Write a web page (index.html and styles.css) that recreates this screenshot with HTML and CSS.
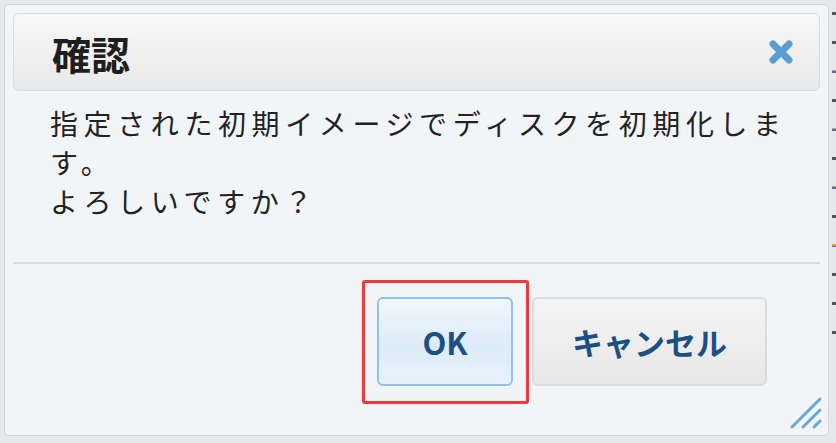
FILE: index.html
```html
<!DOCTYPE html>
<html lang="ja">
<head>
    <meta charset="UTF-8">
    <meta name="viewport" content="width=device-width, initial-scale=1.0">
    <title>確認</title>
    <link rel="stylesheet" href="styles.css">
</head>
<body>
    <div class="page">
        <div class="dialog">
            <div class="titlebar">
                <span class="title">確認</span>
                <button class="close" title="閉じる">
                    <svg width="28" height="28" viewBox="0 0 28 28">
                        <path d="M6 6 L22 22 M22 6 L6 22" stroke="#5b9dd2" stroke-width="7" stroke-linecap="round"/>
                    </svg>
                </button>
            </div>
            <div class="content">
                <p>指定された初期イメージでディスクを初期化します。<br>よろしいですか？</p>
            </div>
            <div class="buttonpane">
                <button class="btn btn-ok">OK</button>
                <button class="btn btn-cancel">キャンセル</button>
            </div>
            <!-- リサイズハンドル -->
            <svg class="grip" width="36" height="36" viewBox="0 0 36 36">
                <path d="M4 32 L32 4 M15 32 L32 15 M26 32 L32 26" stroke="#6aa6d8" stroke-width="3" stroke-linecap="round"/>
            </svg>
        </div>
        <div class="side">
            <i></i><i></i><i class="c"></i><i></i><i class="c"></i><i></i><i class="c"></i><i></i><i class="c"></i><i></i><i></i><i></i>
        </div>
    </div>
</body>
</html>
```

FILE: styles.css
```css
body {
    margin: 0;
    padding: 0;
    background-color: #e7e8ea;
    font-family: "Noto Sans CJK JP", "Noto Sans", sans-serif;
    color: #222;
}

.page {
    display: flex;
    padding: 4px 0 0 4px;
    height: 439px;
}

.dialog {
    position: relative;
    width: 807px;
    height: 414px;
    padding: 8px;
    background: #f2f5f8;
    border: 1px solid #d3d5d8;
    border-radius: 4px;
    display: flex;
    flex-direction: column;
}

.titlebar {
    height: 76px;
    border: 1px solid #dcdcdc;
    border-radius: 6px;
    background: linear-gradient(#f7f7f7, #e9e9e9);
    display: flex;
    align-items: center;
    justify-content: space-between;
    padding: 0 24px 0 38px;
}

.title {
    font-size: 39px;
    font-weight: bold;
    color: #1e1e1e;
    margin-top: 2px;
}

.close {
    border: none;
    background: none;
    padding: 0;
    width: 28px;
    height: 28px;
    cursor: pointer;
}

.content {
    padding: 13px 10px 41px 37px;
    border-bottom: 2px solid #dcdfe2;
}

.content p {
    margin: 0;
    font-size: 28px;
    letter-spacing: 5.6px;
    line-height: 39px;
}

.buttonpane {
    display: flex;
    justify-content: flex-end;
    gap: 19px;
    padding: 33px 53px 0 0;
}

.btn {
    height: 89px;
    border-radius: 6px;
    font-family: "Noto Sans CJK JP", "Noto Sans", sans-serif;
    font-size: 31px;
    font-weight: bold;
    color: #1c4f84;
    cursor: pointer;
}

.btn-ok {
    position: relative;
    width: 136px;
    background: linear-gradient(#f1f7fd, #dcebf8 55%, #e8f2fb);
    border: 2px solid #92c2ea;
}

/* 注釈の赤枠 */
.btn-ok::after {
    content: "";
    position: absolute;
    top: -19px;
    left: -17px;
    right: -18px;
    bottom: -20px;
    border: 3px solid #f5363d;
    border-radius: 3px;
}

.btn-cancel {
    width: 235px;
    background: linear-gradient(#f4f4f4, #e7e7e7);
    border: 2px solid #dcdcdc;
}

.grip {
    position: absolute;
    right: 4px;
    bottom: 4px;
}

.side {
    display: flex;
    flex-direction: column;
    gap: 26px;
    padding: 8px 0 0 3px;
}

.side i {
    display: block;
    width: 4px;
    height: 3px;
    background: #555;
}

.side i.c {
    background: linear-gradient(#e39b3c 50%, #4a6fc2 50%);
}
```
